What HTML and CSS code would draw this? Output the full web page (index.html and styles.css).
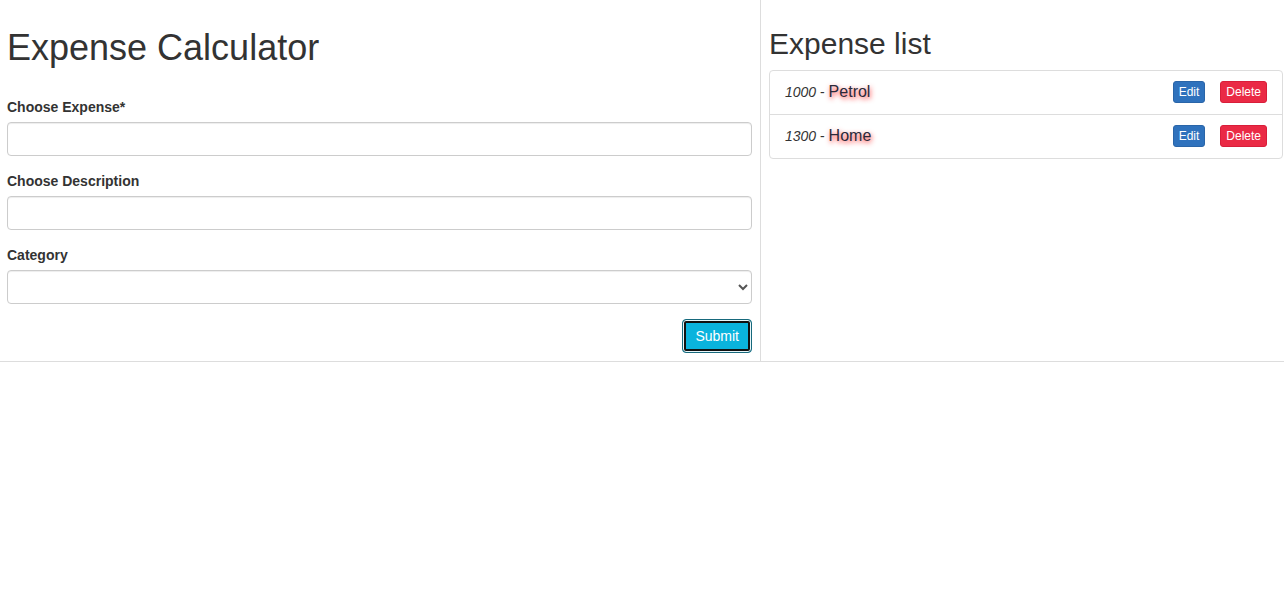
FILE: index.html
```html
<!DOCTYPE html>
<html lang="en">
<head>
<meta charset="utf-8">
<title>Expense Calculator</title>
<link rel="stylesheet" href="styles.css">
</head>
<body>
<div class="app">
  <section class="left">
    <h1 class="title">Expense Calculator</h1>
    <form class="form">
      <div class="form-group">
        <label class="label" for="exp">Choose Expense*</label>
        <input class="control" id="exp" type="text">
      </div>
      <div class="form-group">
        <label class="label" for="desc">Choose Description</label>
        <input class="control" id="desc" type="text">
      </div>
      <div class="form-group">
        <label class="label" for="cat">Category</label>
        <select class="control select" id="cat"><option></option></select>
      </div>
      <div class="actions">
        <button type="button" class="btn-submit">Submit</button>
      </div>
    </form>
  </section>
  <section class="right">
    <h2 class="subtitle">Expense list</h2>
    <ul class="list">
      <li class="item">
        <span class="entry"><em class="amount">1000</em> - <span class="name">Petrol</span></span>
        <span class="buttons"><button class="btn-xs edit">Edit</button><button class="btn-xs delete">Delete</button></span>
      </li>
      <li class="item">
        <span class="entry"><em class="amount">1300</em> - <span class="name">Home</span></span>
        <span class="buttons"><button class="btn-xs edit">Edit</button><button class="btn-xs delete">Delete</button></span>
      </li>
    </ul>
  </section>
</div>
</body>
</html>
```
FILE: styles.css
```css
* { box-sizing: border-box; }
html, body { margin: 0; padding: 0; background: #fff; }
body {
  font-family: "Liberation Sans", Arial, Helvetica, sans-serif;
  font-size: 14px;
  line-height: 20px;
  color: #333;
}
.app {
  display: flex;
  border-bottom: 1px solid #ddd;
}
.left {
  width: 761px;
  flex: none;
  padding: 0 8px 8px 7px;
  border-right: 1px solid #ddd;
}
.title {
  margin: 28px 0 29px;
  font-size: 36px;
  line-height: 40px;
  font-weight: 500;
  color: #333;
}
.form { margin: 0; }
.form-group { margin-bottom: 15px; }
.label {
  display: block;
  font-weight: bold;
  margin-bottom: 5px;
  line-height: 20px;
}
.control {
  display: block;
  width: 100%;
  height: 34px;
  padding: 6px 12px;
  font-family: inherit;
  font-size: 14px;
  color: #555;
  background: #fff;
  border: 1px solid #ccc;
  border-radius: 4px;
  box-shadow: inset 0 1px 1px rgba(0,0,0,.075);
}
.select { padding: 6px 8px; }
.actions {
  display: flex;
  justify-content: flex-end;
}
.btn-submit {
  height: 34px;
  padding: 6px 12px;
  font-family: inherit;
  font-size: 14px;
  line-height: 20px;
  color: #fff;
  background: #0ab3dd;
  border: 1px solid #17697c;
  border-radius: 4px;
  box-shadow: inset 0 0 0 1px #e8f6fa, inset 0 0 0 3px #111;
}
.right {
  flex: 1;
  padding: 0 1px 0 8px;
}
.subtitle {
  margin: 27px 0 10px;
  font-size: 30px;
  line-height: 33px;
  font-weight: 500;
  color: #333;
}
.list {
  list-style: none;
  margin: 0;
  padding: 0;
  border: 1px solid #ddd;
  border-radius: 4px;
}
.item {
  display: flex;
  align-items: flex-start;
  justify-content: space-between;
  padding: 10px 15px 11px;
}
.item + .item { border-top: 1px solid #ddd; }
.entry { line-height: 21px; }
.amount { font-style: italic; }
.name {
  font-size: 16px;
  color: #2a2a3a;
  text-shadow: 1px 2px 5px rgba(255, 0, 0, .85);
}
.buttons { display: flex; gap: 15px; }
.btn-xs {
  height: 22px;
  padding: 1px 5px;
  font-family: inherit;
  font-size: 12px;
  line-height: 18px;
  color: #fff;
  border: 1px solid transparent;
  border-radius: 3px;
}
.edit { background: #2f72bd; border-color: #2a65a8; }
.delete { background: #ea2a45; border-color: #d81e3a; }
```
